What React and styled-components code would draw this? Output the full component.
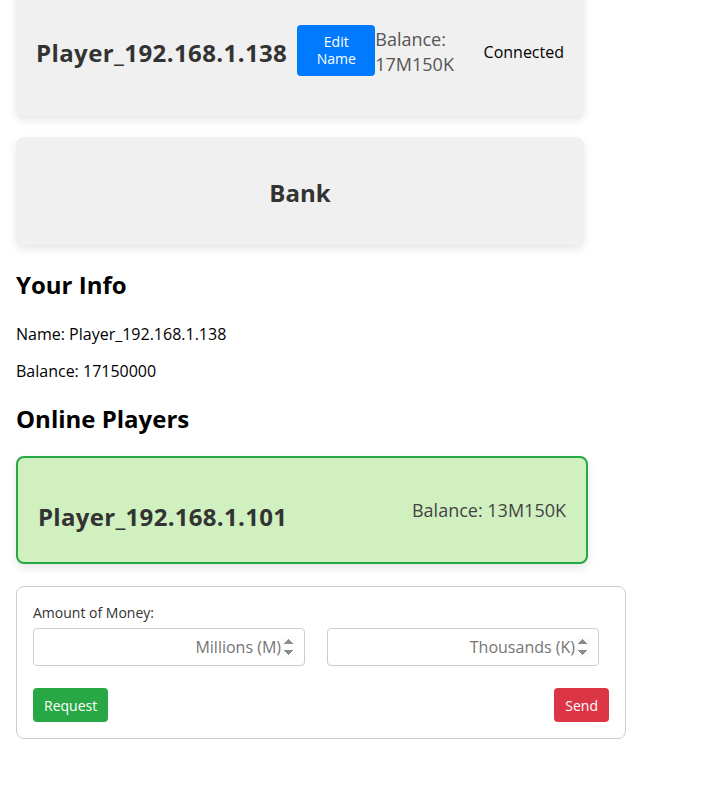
import React from 'react';
import styled, { createGlobalStyle } from 'styled-components';

const GlobalStyle = createGlobalStyle`
  body {
    margin: 0;
    background: #ffffff;
    font-family: 'Open Sans', 'Noto Sans', sans-serif;
    color: #000;
  }
`;

const Page = styled.div`
  padding: 0 16px;
  margin-top: -12px;
`;

const Card = styled.div`
  box-sizing: border-box;
  width: 568px;
  padding: 20px;
  border-radius: 8px;
  background-color: #f0f0f0;
  box-shadow: 0 4px 8px rgba(0, 0, 0, 0.1);
  margin-bottom: 21px;
`;

const HeaderCard = styled(Card)`
  display: flex;
  align-items: center;
  height: 128px;
`;

const PlayerName = styled.h2`
  margin: 0;
  font-size: 24px;
  font-weight: 700;
  letter-spacing: 0.4px;
  color: #333;
  white-space: nowrap;
`;

const EditButton = styled.button`
  width: 78px;
  height: 51px;
  margin: 0 0 4px 10px;
  padding: 0 10px;
  border: none;
  border-radius: 4px;
  background-color: #007bff;
  color: #fff;
  font: 400 14px/17px 'Open Sans', 'Noto Sans', sans-serif;
`;

const HeaderBalance = styled.div`
  width: 90px;
  font-size: 18px;
  line-height: 25px;
  color: #555;
`;

const Status = styled.div`
  margin-left: auto;
  font-size: 16px;
  color: #000;
`;

const BankTitle = styled.h2`
  margin: 22px 0 18px;
  font-size: 24px;
  line-height: 28px;
  text-align: center;
  color: #333;
`;

const SectionTitle = styled.h2`
  margin: ${p => p.$top}px 0 0;
  font-size: 24px;
  line-height: 32px;
`;

const Info = styled.p`
  margin: ${p => p.$top}px 0 0;
  font-size: 16px;
  line-height: 22px;
`;

const PlayerCard = styled.div`
  box-sizing: border-box;
  display: flex;
  align-items: center;
  justify-content: space-between;
  width: 572px;
  height: 108px;
  margin-top: 21px;
  padding: 0 20px;
  border: 2px solid #28a745;
  border-radius: 8px;
  background-color: #d0f0c0;
  box-shadow: 0 4px 8px rgba(0, 0, 0, 0.1);
`;

const OnlineName = styled.h3`
  margin: 12px 0 0;
  font-size: 24px;
  font-weight: 700;
  letter-spacing: 0.3px;
  color: #333;
`;

const OnlineBalance = styled.span`
  font-size: 18px;
  color: #444;
`;

const Form = styled.div`
  box-sizing: border-box;
  width: 610px;
  margin-top: 22px;
  padding: 16px;
  border: 1px solid #ccc;
  border-radius: 8px;
`;

const Label = styled.label`
  display: block;
  font-size: 14px;
  line-height: 20px;
  color: #333;
`;

const Inputs = styled.div`
  display: grid;
  grid-template-columns: 272px 272px;
  column-gap: 22px;
  margin-top: 5px;
`;

const Input = styled.input`
  box-sizing: border-box;
  height: 38px;
  padding: 0 8px;
  border: 1px solid #ccc;
  border-radius: 4px;
  font: 400 16px 'Open Sans', 'Noto Sans', sans-serif;
  text-align: right;

  &::placeholder {
    color: #757575;
  }

  &::-webkit-inner-spin-button,
  &::-webkit-outer-spin-button {
    opacity: 1;
    background-color: #e9e9ed;
  }
`;

const Actions = styled.div`
  display: flex;
  justify-content: space-between;
  margin-top: 22px;
`;

const ActionButton = styled.button`
  height: 34px;
  padding: 0 11px;
  border: none;
  border-radius: 4px;
  background-color: ${p => p.$color};
  color: #fff;
  font: 400 14px 'Open Sans', 'Noto Sans', sans-serif;
`;

export default function App() {
  return (
    <Page>
      <GlobalStyle />
      <HeaderCard>
        <PlayerName>Player_192.168.1.138</PlayerName>
        <EditButton>Edit Name</EditButton>
        <HeaderBalance>Balance: 17M150K</HeaderBalance>
        <Status>Connected</Status>
      </HeaderCard>

      <Card>
        <BankTitle>Bank</BankTitle>
      </Card>

      <SectionTitle $top={24}>Your Info</SectionTitle>
      <Info $top={22}>Name: Player_192.168.1.138</Info>
      <Info $top={15}>Balance: 17150000</Info>

      <SectionTitle $top={21}>Online Players</SectionTitle>
      <PlayerCard>
        <OnlineName>Player_192.168.1.101</OnlineName>
        <OnlineBalance>Balance: 13M150K</OnlineBalance>
      </PlayerCard>

      <Form>
        <Label>Amount of Money:</Label>
        <Inputs>
          <Input type="number" placeholder="Millions (M)" />
          <Input type="number" placeholder="Thousands (K)" />
        </Inputs>
        <Actions>
          <ActionButton $color="#28a745">Request</ActionButton>
          <ActionButton $color="#dc3545">Send</ActionButton>
        </Actions>
      </Form>
    </Page>
  );
}
